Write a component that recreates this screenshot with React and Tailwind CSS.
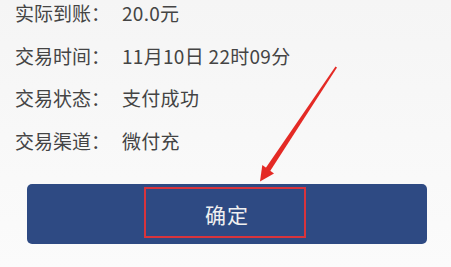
import React from "react";

const rows = [
  { label: "实际到账：", value: "20.0元" },
  { label: "交易时间：", value: "11月10日 22时09分" },
  { label: "交易状态：", value: "支付成功" },
  { label: "交易渠道：", value: "微付充" },
];

const font = { fontFamily: '"Noto Sans CJK SC", "Noto Sans", sans-serif' };

export default function App() {
  return (
    <div
      className="relative w-[451px] h-[267px] overflow-hidden bg-gradient-to-b from-[#f5f5f5] to-[#fbfbfb]"
      style={font}
    >
      <div className="flex flex-col gap-[23.5px] pt-[3px] pl-[15px] text-[19px] leading-[19px] text-[#444444]">
        {rows.map((r) => (
          <div key={r.label} className="flex items-center">
            <span className="w-[107px] shrink-0">{r.label}</span>
            <span className="tracking-[0.3px]">{r.value}</span>
          </div>
        ))}
      </div>

      <div className="mt-[34.5px] ml-[27px] w-[400px] h-[60px] rounded-[5px] bg-[#2e4a83] relative flex items-center justify-center">
        <span className="text-[21px] leading-[21px] text-[#f0f0f0] tracking-[1px]">确定</span>
        {/* annotation box */}
        <div className="absolute left-[117px] top-[3px] w-[162px] h-[51px] border-2 border-[#d8343c]" />
      </div>

      {/* annotation arrow */}
      <svg className="absolute inset-0" width="451" height="267" viewBox="0 0 451 267">
        <polygon points="337,67.5 335.5,66.5 265.5,168.3 270,171.2" fill="#e42a25" />
        <polygon points="260,181.5 274,173.5 262.3,165" fill="#e42a25" />
      </svg>
    </div>
  );
}
